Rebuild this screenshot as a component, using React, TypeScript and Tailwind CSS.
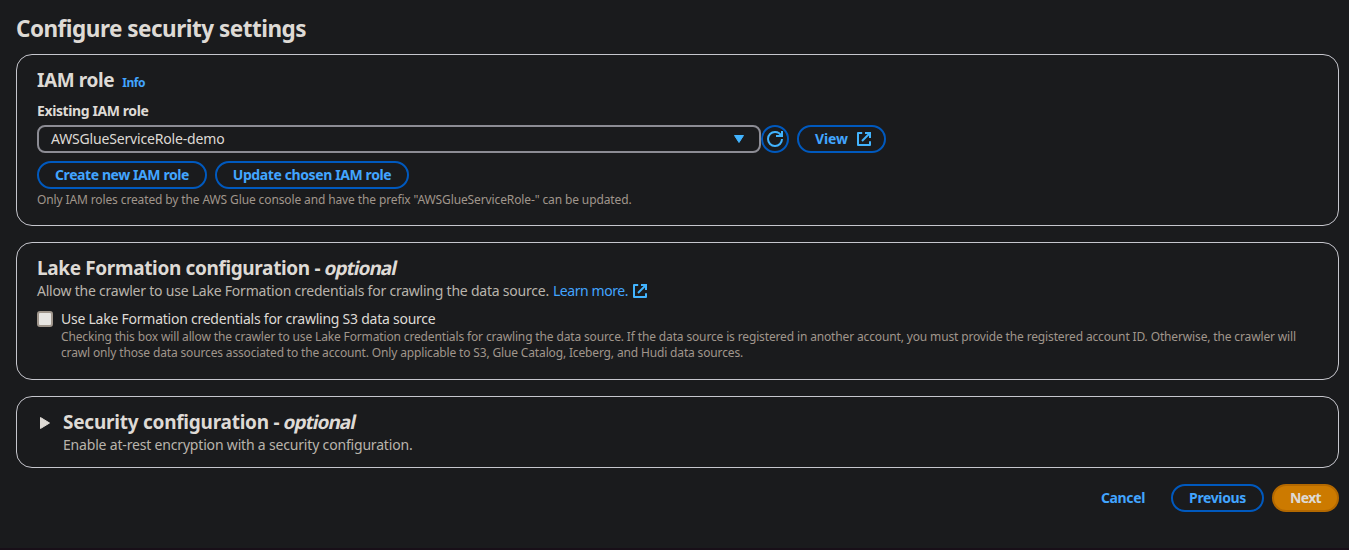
import type { ReactNode } from "react";

function ExternalIcon() {
  return (
    <svg className="size-4 shrink-0" viewBox="0 0 16 16" fill="none" stroke="#42b4ff" strokeWidth="2" aria-hidden="true">
      <path strokeLinecap="square" d="M10 2h4v4" />
      <path d="m6 10 8-8" />
      <path strokeLinecap="square" strokeLinejoin="round" d="M14 11.2V14H2V2h3.2" />
    </svg>
  );
}

function RefreshIcon() {
  return (
    <svg className="size-4 shrink-0" viewBox="0 0 16 16" fill="none" stroke="#42b4ff" strokeWidth="2" aria-hidden="true">
      <path strokeLinecap="square" d="M10 5h5V1" />
      <path d="M15 8a6.957 6.957 0 0 1-7 7 6.957 6.957 0 0 1-7-7 6.957 6.957 0 0 1 7-7 6.87 6.87 0 0 1 6.3 4" />
    </svg>
  );
}

function Button({ children, className }: { children: ReactNode; className: string }) {
  return (
    <button
      type="button"
      className={`flex h-7 shrink-0 items-center justify-center rounded-full border-2 text-sm leading-5 font-bold whitespace-nowrap ${className}`}
    >
      {children}
    </button>
  );
}

function Panel({ children, className }: { children: ReactNode; className: string }) {
  return <section className={`rounded-2xl border border-[#c6c6cd] px-5 ${className}`}>{children}</section>;
}

function Optional() {
  return <span className="inline-block -skew-x-12 tracking-[-0.95px]">optional</span>;
}

const outlined = "border-[#0059be] text-[#42a5ff]";

export default function App() {
  return (
    <main className="flex h-[550px] w-full flex-col border-b-2 border-[#180f18] bg-[#1a1b1d] pr-2.5 pl-4 font-['Noto_Sans',sans-serif] text-[#dedad5]">
      <h1 className="mt-3.5 h-[30px] text-[22.5px] leading-[30px] font-bold tracking-[-0.505px] whitespace-nowrap">
        Configure security settings
      </h1>

      <Panel className="mt-2.5 h-[172px] pt-[13px]">
        <div className="flex h-6 items-baseline gap-2">
          <h2 className="text-[19px] leading-6 font-bold tracking-[-0.4px]">IAM role</h2>
          <a className="text-xs leading-4 font-bold tracking-[-0.4px] text-[#42a5ff]">Info</a>
        </div>
        <div className="mt-[9px] text-sm leading-5 font-bold tracking-[-0.4px]">Existing IAM role</div>
        <div className="mt-1 flex items-center">
          <div className="flex h-7 w-[724px] items-center justify-between rounded-lg border-2 border-[#8c8c94] px-3">
            <span className="text-sm leading-5 tracking-[-0.17px]">AWSGlueServiceRole-demo</span>
            <svg className="size-4" viewBox="0 0 16 16" fill="#42b4ff" stroke="#42b4ff" strokeLinejoin="round" aria-hidden="true">
              <path d="M3.5 4.5h9L8 11.5z" />
            </svg>
          </div>
          <Button className="w-7 border-[#0059be]">
            <RefreshIcon />
          </Button>
          <Button className="ml-2 w-[89px] gap-2 border-[#0059be] pl-1 text-[#42a5ff]">
            <span className="tracking-[-0.1px]">View</span>
            <ExternalIcon />
          </Button>
        </div>
        <div className="mt-2 flex gap-2">
          <Button className={`w-[170px] tracking-[-0.41px] ${outlined}`}>Create new IAM role</Button>
          <Button className={`w-[194px] tracking-[-0.39px] ${outlined}`}>Update chosen IAM role</Button>
        </div>
        <p className="mt-[3px] text-xs leading-4 tracking-[-0.122px] whitespace-nowrap text-[#a0968c]">
          Only IAM roles created by the AWS Glue console and have the prefix "AWSGlueServiceRole-" can be updated.
        </p>
      </Panel>

      <Panel className="mt-4 h-[138px] pt-[13px]">
        <h2 className="h-6 text-[19px] leading-6 font-bold tracking-[-0.36px] whitespace-pre">
          {"Lake Formation configuration - "}
          <Optional />
        </h2>
        <div className="mt-px flex h-5 items-center text-sm leading-5 text-[#b9b4ac]">
          <span className="tracking-[-0.223px]">
            Allow the crawler to use Lake Formation credentials for crawling the data source.
          </span>
          <a className="ml-1 flex items-center gap-1 tracking-[-0.43px] text-[#42a5ff]">
            Learn more.
            <ExternalIcon />
          </a>
        </div>
        <label className="mt-2 flex gap-2">
          <span className="mt-0.5 size-4 shrink-0 rounded-[3px] border-2 border-[#a0968c] bg-[#e8e6e3]" />
          <span className="flex flex-col whitespace-nowrap">
            <span className="text-sm leading-5 tracking-[-0.242px]">
              Use Lake Formation credentials for crawling S3 data source
            </span>
            <span className="text-xs leading-4 tracking-[-0.143px] text-[#a0968c]">
              Checking this box will allow the crawler to use Lake Formation credentials for crawling the data source. If
              the data source is registered in another account, you must provide the registered account ID. Otherwise,
              the crawler will
              <br />
              <span className="tracking-[-0.151px]">
                crawl only those data sources associated to the account. Only applicable to S3, Glue Catalog, Iceberg,
                and Hudi data sources.
              </span>
            </span>
          </span>
        </label>
      </Panel>

      <Panel className="mt-4 flex h-[72px] pt-[13px]">
        <svg className="mt-1 mr-2.5 size-4 shrink-0" viewBox="0 0 16 16" fill="#dedad5" stroke="#dedad5" strokeLinejoin="round" aria-hidden="true">
          <path d="M3.5 3.5v11L12.5 9z" />
        </svg>
        <div>
          <h2 className="h-6 text-[19px] leading-6 font-bold tracking-[-0.245px] whitespace-pre">
            {"Security configuration - "}
            <Optional />
          </h2>
          <p className="mt-px text-sm leading-5 tracking-[-0.18px] text-[#b9b4ac]">
            Enable at-rest encryption with a security configuration.
          </p>
        </div>
      </Panel>

      <footer className="mt-4 flex justify-end">
        <Button className="mr-2 w-20 border-transparent tracking-[-0.37px] text-[#42a5ff]">Cancel</Button>
        <Button className={`mr-2 w-[93px] tracking-[-0.37px] ${outlined}`}>Previous</Button>
        <Button className="w-[67px] border-[#b46900] bg-[#cc7a00] tracking-[-0.66px] text-[#dedad5]">Next</Button>
      </footer>
    </main>
  );
}
